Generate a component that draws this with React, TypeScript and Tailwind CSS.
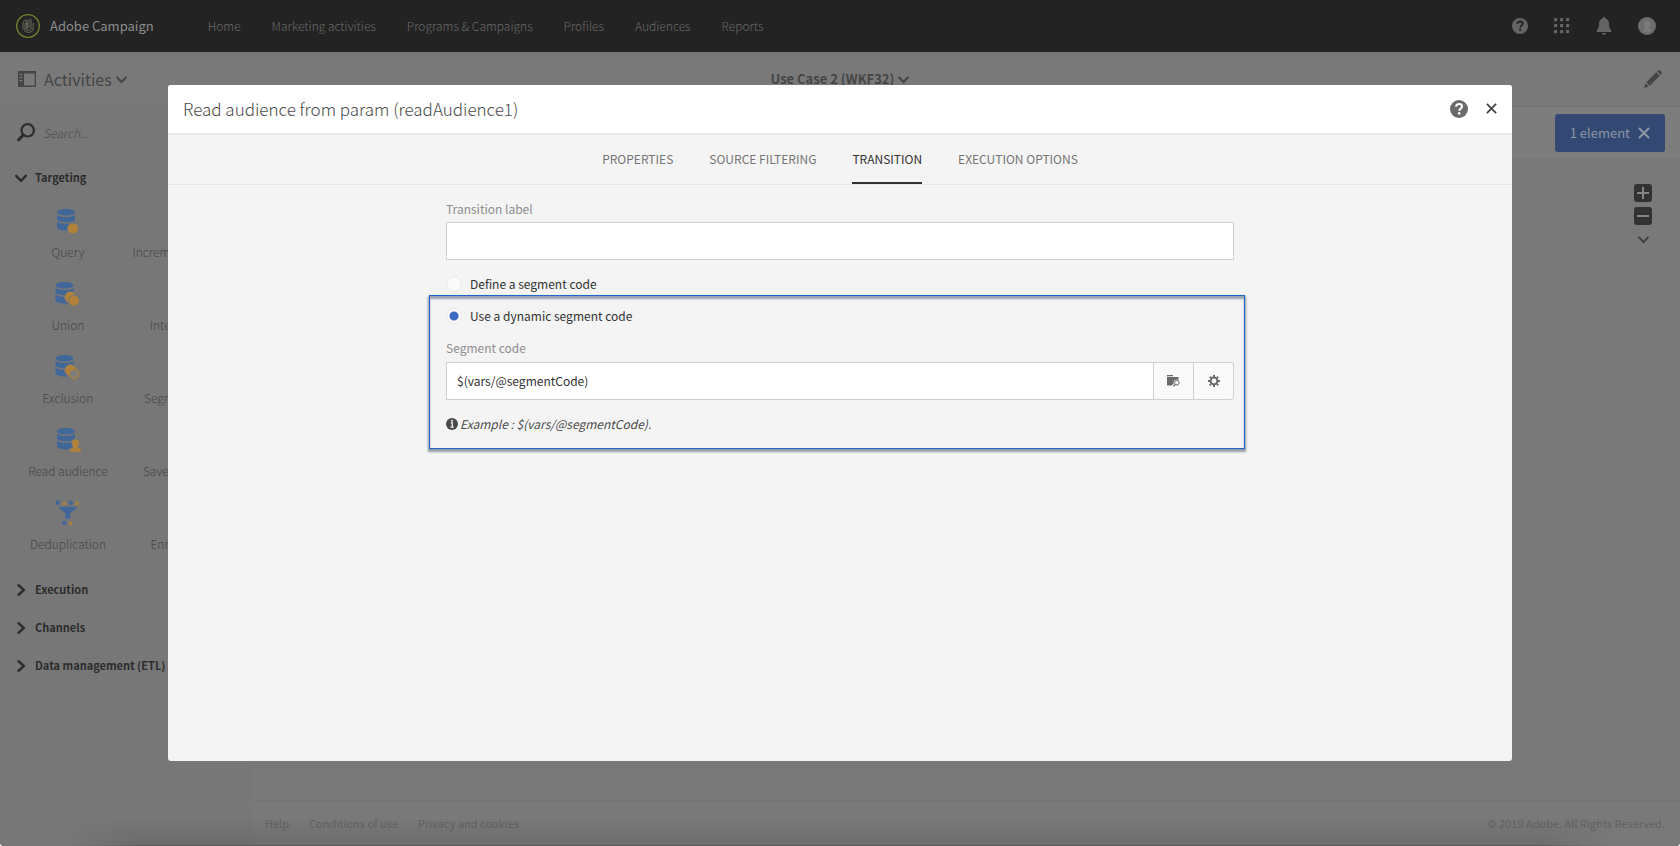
import { useState } from 'react';
import type { ReactNode } from 'react';

const NAV = ['Home', 'Marketing activities', 'Programs & Campaigns', 'Profiles', 'Audiences', 'Reports'];
const TABS = ['PROPERTIES', 'SOURCE FILTERING', 'TRANSITION', 'EXECUTION OPTIONS'];
const SECTIONS = ['Execution', 'Channels', 'Data management (ETL)'];

const inputCls =
  'h-[38px] min-w-0 flex-1 border border-[#d0d0d0] bg-white px-[10px] text-xs text-[#323232] outline-none';
const iconBtnCls =
  'flex items-center justify-center border-[#d0d0d0] bg-[#fafafa] text-[#6a6a6a]';

function Chevron({ className, right }: { className: string; right?: boolean }) {
  return (
    <svg viewBox="0 0 12 12" className={className} fill="none" stroke="currentColor" strokeLinecap="round" aria-hidden>
      <path d={right ? 'M3.5 1.2 8.8 6 3.5 10.8' : 'M1.2 3.8 6 8.8 10.8 3.8'} />
    </svg>
  );
}

function Cross({ className }: { className: string }) {
  return (
    <svg viewBox="0 0 12 12" className={className} fill="none" stroke="currentColor" strokeWidth="2" aria-hidden>
      <path d="M1 1 11 11M11 1 1 11" />
    </svg>
  );
}

function HelpMark({ className, mark }: { className: string; mark: string }) {
  return (
    <svg viewBox="0 0 18 18" className={className} aria-hidden>
      <circle cx="9" cy="9" r="9" fill="currentColor" />
      <path d="M6 6.600C6.200 4.900 7.400 4 9.100 4c1.700 0 2.900 1 2.900 2.400 0 2.100-2.700 2.200-2.700 4.300" fill="none" stroke={mark} strokeWidth="2.100" />
      <circle cx="9.200" cy="13.400" r="1.300" fill={mark} />
    </svg>
  );
}

function Cylinder() {
  return (
    <g fill="#416799">
      <path d="M2 4.300C2 2.500 6 1 11 1s9 1.500 9 3.300S16 7.600 11 7.600 2 6.100 2 4.300Z" />
      <path d="M2 6.800c1.500 1.600 5 2.300 9 2.300s7.500-.7 9-2.300v4.200c0 1.800-4 3.200-9 3.200s-9-1.400-9-3.200Z" />
      <path d="M2 13.400c1.500 1.600 5 2.300 9 2.300s7.500-.7 9-2.300v5.800c0 1.800-4 3.300-9 3.300s-9-1.500-9-3.300Z" />
    </g>
  );
}

const ICONS: Record<string, ReactNode> = {
  query: (
    <>
      <Cylinder />
      <circle cx="18" cy="20.500" r="5.500" fill="#b3823a" stroke="#777" />
    </>
  ),
  union: (
    <>
      <g transform="translate(-1.500)"><Cylinder /></g>
      <circle cx="15.500" cy="16.300" r="5.800" fill="#b3823a" stroke="#777" />
      <circle cx="19" cy="19.800" r="5.500" fill="#b3823a" stroke="#777" />
    </>
  ),
  exclusion: (
    <>
      <g transform="translate(-1.500)"><Cylinder /></g>
      <circle cx="15.500" cy="16.300" r="5.800" fill="#b3823a" stroke="#777" />
      <circle cx="19" cy="19.800" r="4.500" fill="#7d7d7d" stroke="#b3823a" strokeWidth="1.200" />
    </>
  ),
  audience: (
    <>
      <Cylinder />
      <path d="M20.500 12c2.500 0 4 1.700 4 3.900 0 1.500-.8 2.400-1.400 3.400v1.200l3.200 1.400v3.400H14.700v-3.400l3.200-1.400v-1.200c-.6-1-1.400-1.900-1.400-3.400 0-2.200 1.500-3.900 4-3.900Z" fill="#b3823a" stroke="#777" />
    </>
  ),
  dedupe: (
    <>
      <g fill="#416799">
        <circle cx="2.700" cy="2.800" r="2.200" />
        <circle cx="15.700" cy="2.800" r="2.200" />
        <circle cx="9.300" cy="22.800" r="2.200" />
        <path d="M4 6.800h17.500v1.600L15.300 13v5.700h-5V13L4 8.400Z" />
      </g>
      <path d="M9.200.6 11.500 5H7ZM22.200.6 24.500 5H20ZM15.800 20.600 18 25h-4.500Z" fill="#b3823a" />
    </>
  ),
};

const ACTIVITIES = [
  { label: 'Query', icon: 'query', next: 'Incremental query' },
  { label: 'Union', icon: 'union', next: 'Intersection' },
  { label: 'Exclusion', icon: 'exclusion', next: 'Segmentation' },
  { label: 'Read audience', icon: 'audience', next: 'Save audience' },
  { label: 'Deduplication', icon: 'dedupe', next: 'Enrichment' },
];

function TopBar() {
  return (
    <header className="flex h-[52px] shrink-0 items-center bg-[#232323] pr-6 pl-4">
      <svg viewBox="0 0 24 24" className="size-6" fill="none" aria-hidden>
        <circle cx="12" cy="12" r="11.300" stroke="#79852f" strokeWidth="1.300" />
        <path d="M7 15.500V10c0-2.700 1.500-4 4-4v8.500M9 18v-7.500c0-1.300.6-2 2-2V19M15 5v9c0 1.600-.8 2.500-2.800 2.500M13 5v9.200M12.200 18.500c3.300-.2 5-1.700 5-4.500V9" stroke="#7b816a" strokeWidth=".8" />
      </svg>
      <span className="ml-[10px] text-[13px] text-[#8c8c8c]">Adobe Campaign</span>
      <nav className="ml-[54px] flex gap-[31px] text-xs font-light text-[#696969]">
        {NAV.map((item) => (
          <a key={item} href="#">{item}</a>
        ))}
      </nav>
      <div className="ml-auto flex items-center gap-[26px] text-[#646464]">
        <button type="button" aria-label="Help"><HelpMark className="size-4" mark="#232323" /></button>
        <button type="button" aria-label="Solutions">
          <svg viewBox="0 0 16 16" className="size-4" fill="currentColor" aria-hidden>
            {[0, 6, 12].map((y) => [0, 6, 12].map((x) => <rect key={`${x}-${y}`} x={x} y={y} width="3.200" height="3.200" rx=".6" />))}
          </svg>
        </button>
        <button type="button" aria-label="Notifications">
          <svg viewBox="0 0 16 18" className="h-[18px] w-4" fill="currentColor" aria-hidden>
            <path d="M8 0c.8 0 1.200.6 1.200 1.300C11.700 1.900 13 4 13 6.500c0 4 .7 5.300 2.200 6.700V15H.8v-1.800C2.300 11.800 3 10.500 3 6.500c0-2.500 1.300-4.600 3.800-5.200C6.800.6 7.200 0 8 0ZM6 16h4c0 1-.8 1.800-2 1.800S6 17 6 16Z" />
          </svg>
        </button>
        <button type="button" aria-label="Account">
          <svg viewBox="0 0 18 18" className="size-[18px]" aria-hidden>
            <circle cx="9" cy="9" r="9" fill="#6c6c6c" />
            <path d="M9 3.500c2 0 3.300 1.400 3.300 3.500 0 1.500-.6 2.500-1.300 3.400v1.200l3 1.600C12.500 15 11 15.500 9 15.500S5.500 15 4 13.200l3-1.600v-1.200C6.300 9.500 5.700 8.500 5.700 7c0-2.100 1.300-3.500 3.300-3.500Z" fill="#7b7b7b" />
          </svg>
        </button>
      </div>
    </header>
  );
}

function SubBar() {
  return (
    <div className="grid h-[54px] shrink-0 grid-cols-3 items-center bg-[#797979] px-[18px] text-[#454545]">
      <button type="button" className="flex items-center justify-self-start text-base">
        <svg viewBox="0 0 18 16" className="mr-2 h-4 w-[18px]" aria-hidden>
          <path d="M0 0h18v16H0ZM6 2.500v12h10.700v-12ZM1.500 3v1.300h2.700V3ZM1.500 6v1.300h2.700V6ZM1.500 9v1.300h2.700V9Z" fill="currentColor" fillRule="evenodd" />
        </svg>
        Activities
        <Chevron className="ml-1 size-[11px] stroke-[2.2]" />
      </button>
      <button type="button" className="flex items-center justify-self-center text-[13px] font-bold">
        Use Case 2 (WKF32)
        <Chevron className="ml-1 size-[11px] stroke-[2.2]" />
      </button>
      <button type="button" aria-label="Edit" className="justify-self-end">
        <svg viewBox="0 0 18 18" className="size-[18px]" fill="currentColor" aria-hidden>
          <path d="M0 18 1.500 13.300 4.700 16.500ZM2.300 12.300 12.300 2.300 15.700 5.700 5.700 15.700ZM13.200 1.400 14 .6c.6-.6 1.300-.6 1.900 0l1.500 1.500c.6.6.6 1.300 0 1.900l-.8.8Z" />
        </svg>
      </button>
    </div>
  );
}

function Sidebar() {
  return (
    <aside className="flex w-[250px] shrink-0 flex-col overflow-hidden bg-[#777777] text-[#2c2c2c]">
      <label className="flex h-[53px] shrink-0 items-center border-y border-[#747474] pl-[17px]">
        <svg viewBox="0 0 18 19" className="h-[19px] w-[18px]" fill="none" stroke="currentColor" aria-hidden>
          <circle cx="10.700" cy="7.300" r="6.200" strokeWidth="2.200" />
          <path d="M6.200 12 1.600 16.900" strokeWidth="3" strokeLinecap="round" />
        </svg>
        <input
          type="search"
          aria-label="Search"
          placeholder="Search..."
          className="ml-2 w-40 text-xs font-light italic outline-none placeholder:text-[#4c4c4c]"
        />
      </label>
      <button type="button" className="flex h-[37px] shrink-0 items-center pl-[15px] text-[11px] font-bold">
        <Chevron className="mr-2 size-3 stroke-[2.4]" />
        Targeting
      </button>
      <ul className="h-[374px] shrink-0 pl-[11px] text-xs font-light text-[#464646]">
        {ACTIVITIES.map((a) => (
          <li key={a.label} className="flex h-[73px] pt-3">
            <div className="flex w-[114px] shrink-0 flex-col items-center">
              <svg viewBox="0 0 27 27" className="h-[27px] w-[27px]" aria-hidden>{ICONS[a.icon]}</svg>
              <span className="mt-[7px] leading-5">{a.label}</span>
            </div>
            <span className="mt-[34px] w-[114px] shrink-0 text-center leading-5">{a.next}</span>
          </li>
        ))}
      </ul>
      {SECTIONS.map((s) => (
        <button key={s} type="button" className="flex h-[38px] shrink-0 items-center border-t border-[#747474] pl-[15px] text-[11px] font-bold">
          <Chevron right className="mr-2 size-3 stroke-[2.4]" />
          {s}
        </button>
      ))}
    </aside>
  );
}

function Workspace() {
  return (
    <main className="flex min-w-0 flex-1 flex-col bg-[#797979]">
      <div className="flex h-[53px] shrink-0 items-center justify-end border-y border-[#747474] bg-[#7d7d7d] pr-[15px]">
        <button type="button" className="flex h-[38px] items-center rounded-[3px] bg-[#334873] px-[15px] text-[13px] text-[#8d95a5]">
          1 element
          <Cross className="ml-2 size-3" />
        </button>
      </div>
      <div className="flex flex-1 flex-col items-end pt-[25px] pr-7">
        <div className="flex flex-col items-center gap-[5px]">
          <button type="button" aria-label="Zoom in" className="flex size-[18px] items-center justify-center rounded-[3px] bg-[#323232]">
            <svg viewBox="0 0 12 12" className="size-3" stroke="#858585" strokeWidth="2" aria-hidden><path d="M0 6h12M6 0v12" /></svg>
          </button>
          <button type="button" aria-label="Zoom out" className="flex size-[18px] items-center justify-center rounded-[3px] bg-[#323232]">
            <svg viewBox="0 0 12 12" className="size-3" stroke="#858585" strokeWidth="2" aria-hidden><path d="M0 6h12" /></svg>
          </button>
          <button type="button" aria-label="More" className="pt-1 text-[#3c3c3c]">
            <Chevron className="size-[11px] stroke-2" />
          </button>
        </div>
      </div>
      <footer className="flex h-[46px] shrink-0 items-center gap-5 border-t border-[#747474] px-[15px] text-[11px] text-[#626262]">
        <a href="#">Help</a>
        <a href="#">Conditions of use</a>
        <a href="#">Privacy and cookies</a>
        <span className="ml-auto">© 2019 Adobe. All Rights Reserved.</span>
      </footer>
    </main>
  );
}

function SegmentRadio({ label, checked, onSelect }: { label: string; checked: boolean; onSelect: () => void }) {
  return (
    <label className="flex h-4 items-center gap-2 text-xs leading-4 text-[#323232]">
      <input
        type="radio"
        name="segment"
        checked={checked}
        onChange={onSelect}
        className="size-4 appearance-none rounded-full border border-[#e8e8e8] bg-[#fafafa] checked:bg-[radial-gradient(circle,#3b68c0_0_4px,#fafafa_5px)]"
      />
      {label}
    </label>
  );
}

function ActivityDialog() {
  const [tab, setTab] = useState('TRANSITION');
  const [mode, setMode] = useState('dynamic');
  const [label, setLabel] = useState('');
  const [code, setCode] = useState('$(vars/@segmentCode)');

  return (
    <div role="dialog" aria-labelledby="dialog-title" className="flex h-4/5 w-4/5 flex-col overflow-hidden rounded-[3px] bg-[#f4f4f4]">
      <div className="flex h-[50px] shrink-0 items-center border-b-2 border-[#e8e8e8] bg-white px-[15px]">
        <h1 id="dialog-title" className="text-[17px] font-light text-[#4b4b4b]">Read audience from param (readAudience1)</h1>
        <button type="button" aria-label="Help" className="ml-auto text-[#6a6a6a]"><HelpMark className="size-[18px]" mark="#ffffff" /></button>
        <button type="button" aria-label="Close" className="ml-[18px] text-[#444]"><Cross className="size-[11px]" /></button>
      </div>
      <div role="tablist" className="flex h-[50px] shrink-0 justify-center gap-9 border-b border-[#e6e6e6]">
        {TABS.map((t) => (
          <button
            key={t}
            type="button"
            role="tab"
            aria-selected={tab === t}
            onClick={() => setTab(t)}
            className={`border-b-2 pt-[2px] text-xs ${tab === t ? 'border-[#323232] text-[#323232]' : 'border-transparent text-[#747474]'}`}
          >
            {t}
          </button>
        ))}
      </div>
      <form className="mx-auto w-full max-w-[788px] pt-4">
        <label htmlFor="transition-label" className="block text-xs leading-4 text-[#8e8e8e]">Transition label</label>
        <div className="mt-[5px] flex">
          <input id="transition-label" value={label} onChange={(e) => setLabel(e.target.value)} className={inputCls} />
        </div>
        <div className="mt-4">
          <SegmentRadio label="Define a segment code" checked={mode === 'static'} onSelect={() => setMode('static')} />
        </div>
        <div className="mt-[3px] -mr-[11px] -ml-[17px] border border-[#1f66c8] pt-3 pr-[10px] pb-4 pl-4 shadow-[0_2px_2px_1px_#939ba6,inset_0_3px_2px_0_#98a3b3]">
          <SegmentRadio label="Use a dynamic segment code" checked={mode === 'dynamic'} onSelect={() => setMode('dynamic')} />
          <label htmlFor="segment-code" className="mt-4 block text-xs leading-4 text-[#8e8e8e]">Segment code</label>
          <div className="mt-[6px] flex">
            <input id="segment-code" value={code} onChange={(e) => setCode(e.target.value)} className={inputCls} />
            <button type="button" aria-label="Browse" className={`${iconBtnCls} w-[39px] border-y`}>
              <svg viewBox="0 0 13 12" className="h-3 w-[13px]" aria-hidden>
                <path d="M0 0h6v1.200H0ZM0 2h11.500v8.500H0Z" fill="currentColor" />
                <circle cx="9.800" cy="7.600" r="3.100" fill="#fafafa" />
                <circle cx="9.800" cy="7.600" r="2.300" fill="none" stroke="currentColor" />
                <path d="M7.600 9 5.600 11.400" stroke="#fafafa" strokeWidth="2.400" />
                <path d="M8.200 9.300 6.400 11.500" stroke="currentColor" strokeWidth="1.200" />
              </svg>
            </button>
            <button type="button" aria-label="Settings" className={`${iconBtnCls} w-[41px] rounded-r-[3px] border`}>
              <svg viewBox="0 0 12 12" className="size-3" fill="none" stroke="currentColor" aria-hidden>
                <circle cx="6" cy="6" r="3.400" strokeWidth="2" />
                <path d="M6 0v2M6 10v2M0 6h2M10 6h2M1.800 1.800l1.300 1.300M8.900 8.900l1.300 1.300M10.200 1.800 8.900 3.100M3.100 8.900 1.800 10.200" strokeWidth="2" />
              </svg>
            </button>
          </div>
          <p className="mt-4 flex h-4 items-center gap-[2px] text-xs leading-4 text-[#4b4b4b] italic">
            <svg viewBox="0 0 12 12" className="size-3" aria-hidden>
              <circle cx="6" cy="6" r="6" fill="#4b4b4b" />
              <path d="M4.700 4.800h1.600v4M4.500 9.200h3.200" fill="none" stroke="#f4f4f4" strokeWidth="1.300" />
              <circle cx="6" cy="2.700" r="1" fill="#f4f4f4" />
            </svg>
            Example : $(vars/@segmentCode).
          </p>
        </div>
      </form>
    </div>
  );
}

export default function App() {
  return (
    <div className="relative flex h-screen flex-col overflow-hidden rounded-b-[4px] bg-[#797979] font-['Noto_Sans_CJK_SC','Noto_Sans',sans-serif]">
      <TopBar />
      <SubBar />
      <div className="flex min-h-0 flex-1">
        <Sidebar />
        <Workspace />
      </div>
      <div className="absolute inset-x-16 bottom-0 h-7 border-b border-[#5c5c5c] bg-linear-to-b from-transparent to-black/10 mask-x-from-95%" aria-hidden />
      <div className="absolute inset-0 flex items-center justify-center">
        <ActivityDialog />
      </div>
    </div>
  );
}
